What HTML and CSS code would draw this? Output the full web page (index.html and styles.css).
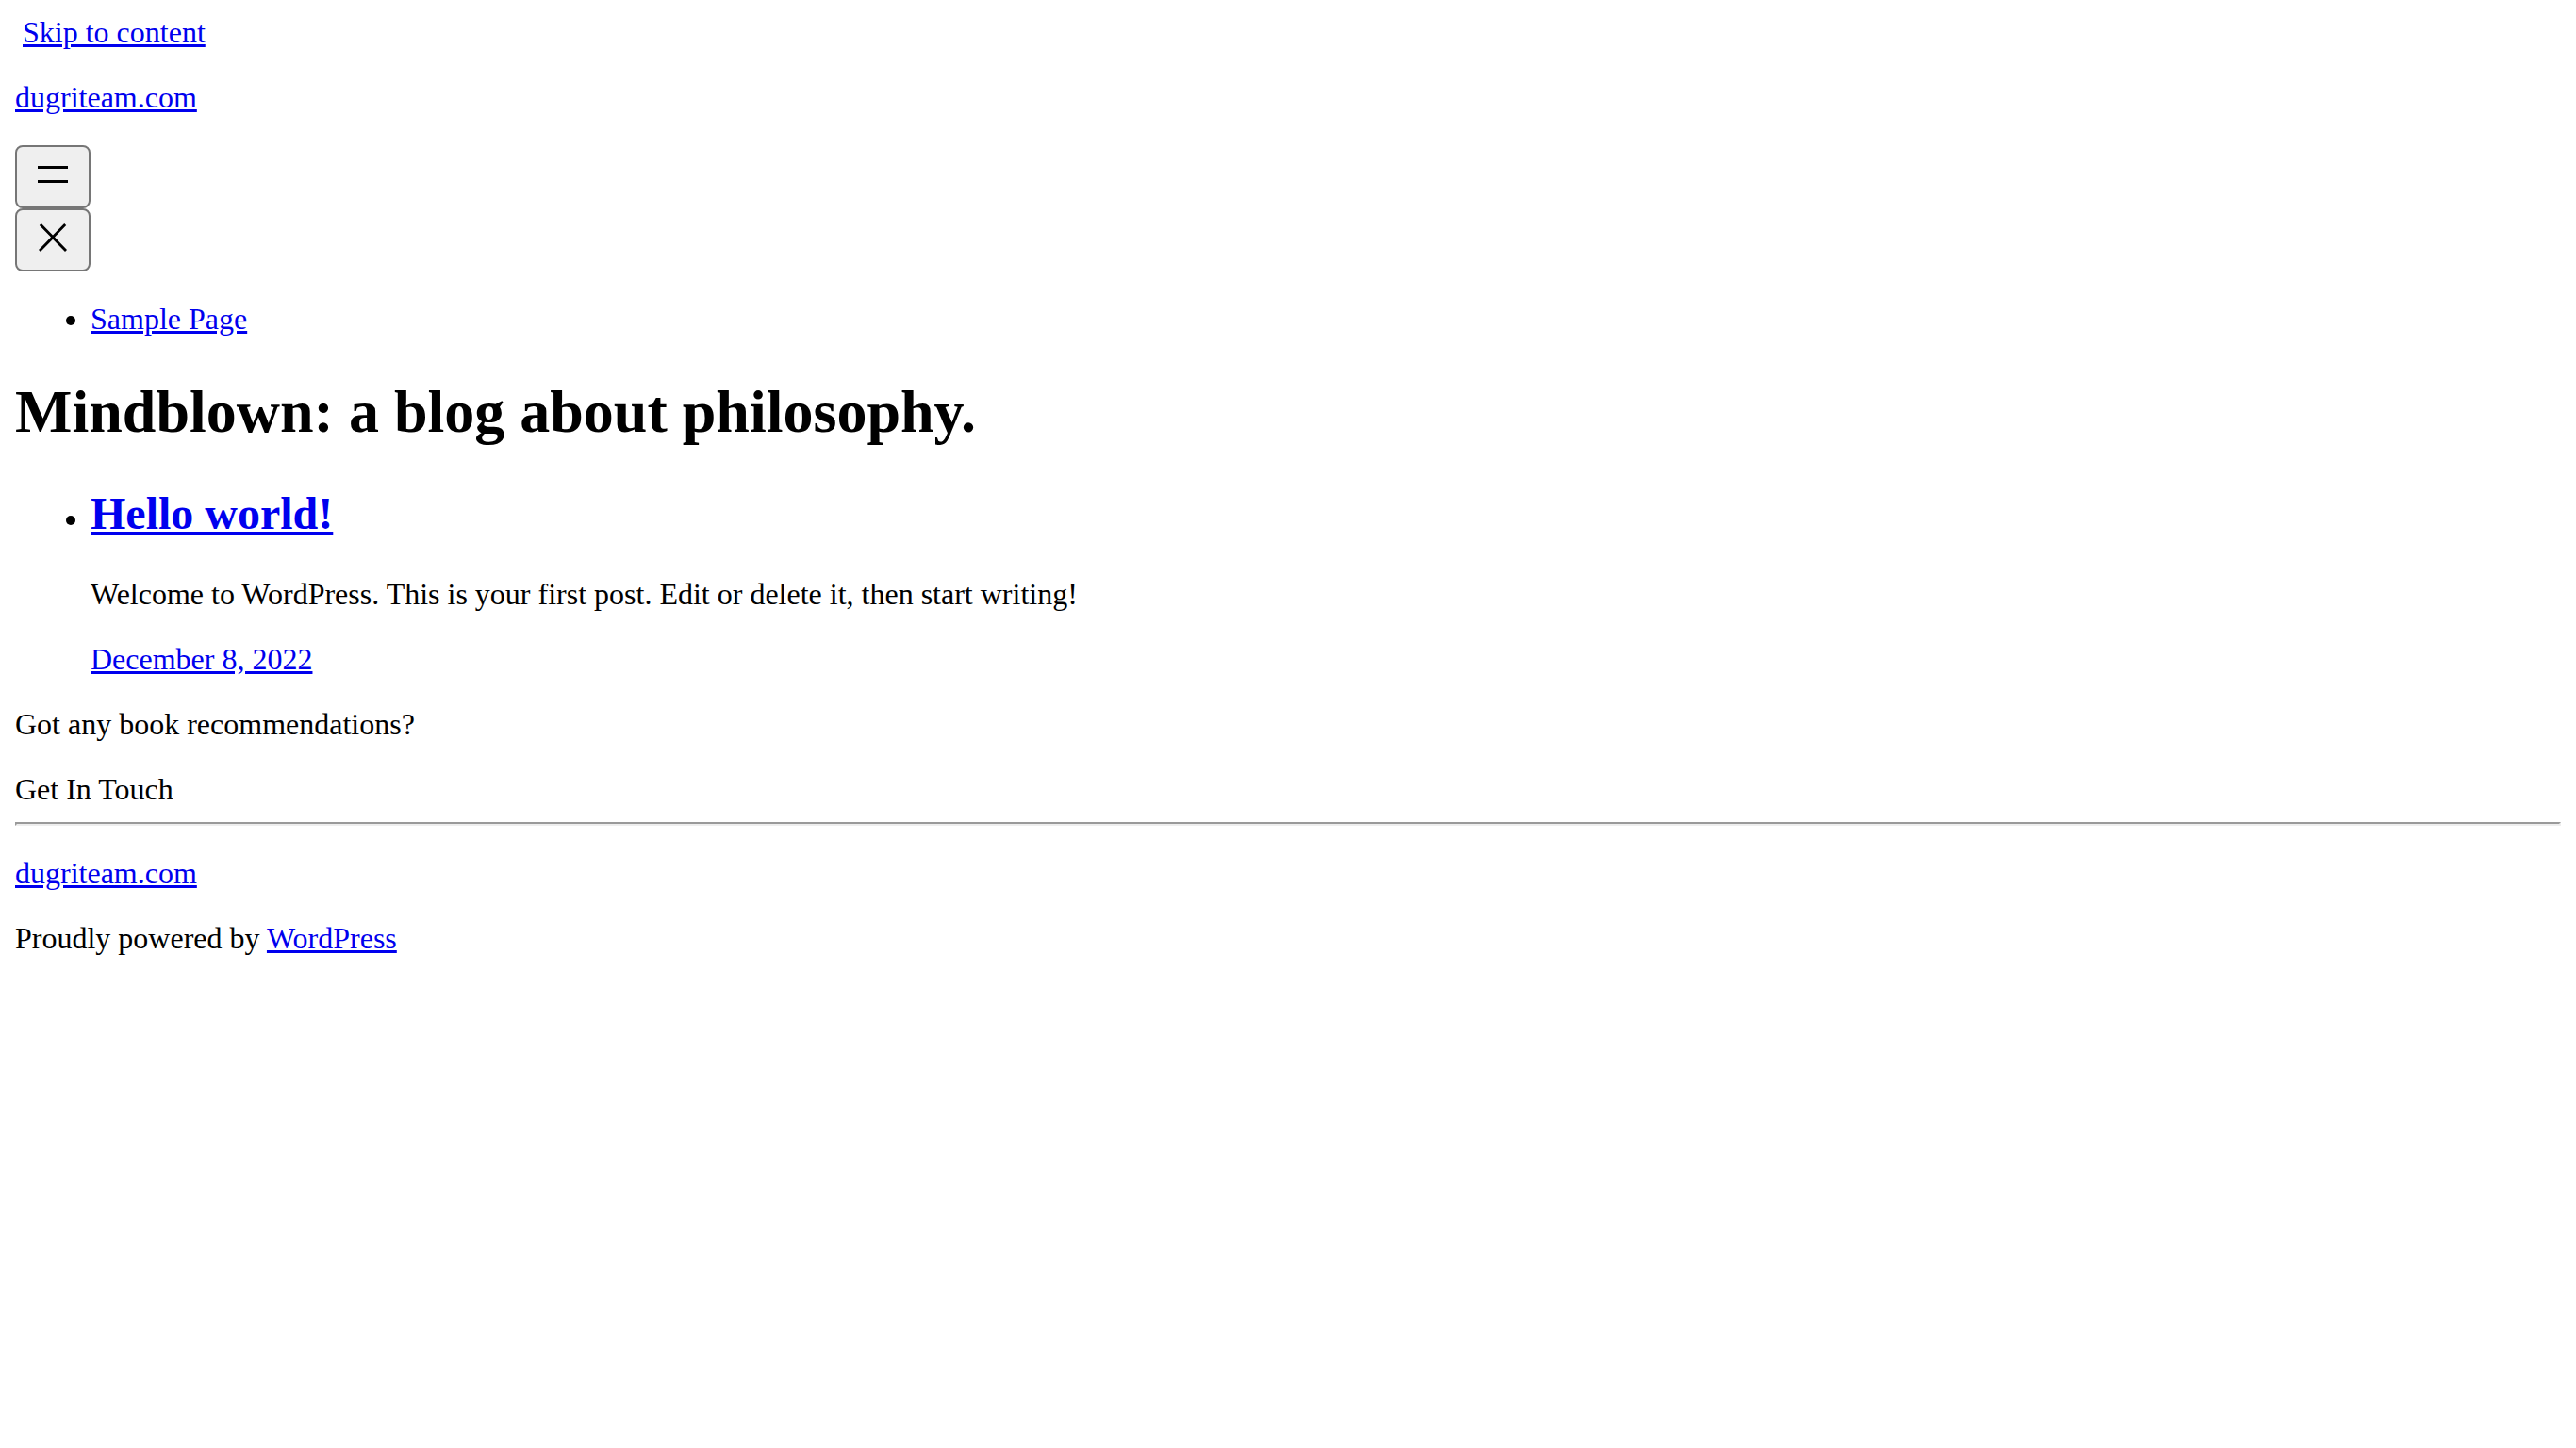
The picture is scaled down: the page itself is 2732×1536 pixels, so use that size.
FILE: index.html
```html
<!DOCTYPE html>
<html lang="en">
<head>
<meta charset="utf-8">
<title>dugriteam.com</title>
<link rel="stylesheet" href="styles.css">
</head>
<body>
<a class="skip-link" href="#content">Skip to content</a>
<header class="site-header">
  <p class="site-title"><a href="#">dugriteam.com</a></p>
  <nav class="nav">
    <div class="nav-buttons">
      <button class="nav-btn" aria-label="Open menu">
        <svg width="48" height="48" viewBox="0 0 24 24" aria-hidden="true"><rect x="4" y="7.5" width="16" height="1.5"/><rect x="4" y="15" width="16" height="1.5"/></svg>
      </button>
      <button class="nav-btn" aria-label="Close menu">
        <svg width="48" height="48" viewBox="0 0 24 24" aria-hidden="true"><path d="M13 11.8l6.1-6.3-1-1-6.1 6.2-6.1-6.2-1 1 6.1 6.3-6.5 6.7 1 1 6.5-6.6 6.5 6.6 1-1z"/></svg>
      </button>
    </div>
    <ul class="list">
      <li><a href="#">Sample Page</a></li>
    </ul>
  </nav>
</header>
<main id="content">
  <h1 class="page-title">Mindblown: a blog about philosophy.</h1>
  <ul class="list">
    <li>
      <h2 class="post-title"><a href="#">Hello world!</a></h2>
      <p class="text">Welcome to WordPress. This is your first post. Edit or delete it, then start writing!</p>
      <p class="text"><a href="#">December 8, 2022</a></p>
    </li>
  </ul>
  <p class="text">Got any book recommendations?</p>
  <div class="cta">Get In Touch</div>
</main>
<hr class="rule">
<footer class="site-footer">
  <p class="text"><a href="#">dugriteam.com</a></p>
  <p class="text">Proudly powered by <a href="#">WordPress</a></p>
</footer>
</body>
</html>
```

FILE: styles.css
```css
html, body {
  background: #ffffff;
}
body {
  margin: 16px;
  font-family: "Liberation Serif", "Times New Roman", serif;
  font-size: 32px;
  color: #000000;
}
a {
  color: #0000ee;
}
.skip-link {
  margin-left: 8px;
}
.site-title,
.text {
  margin: 32px 0;
}
.cta {
  margin: 32px 0 0;
}
.nav-buttons {
  display: flex;
  flex-direction: column;
  align-items: flex-start;
}
.nav-btn {
  display: flex;
  box-sizing: border-box;
  width: 80px;
  height: 67px;
  padding: 5px 14px 10px;
  margin: 0;
  border: 2px solid #767676;
  border-radius: 8px;
  background: #efefef;
  color: #000000;
}
.nav-btn svg {
  display: block;
  fill: currentColor;
}
.list {
  margin: 32px 0;
  padding-left: 80px;
}
.page-title {
  font-size: 64px;
  margin: 42.88px 0;
}
.post-title {
  font-size: 48px;
  margin: 39.84px 0;
}
.rule {
  margin: 16px 0;
  height: 0;
  border-style: solid;
  border-width: 2px;
  border-color: #9a9a9a #eeeeee #eeeeee #9a9a9a;
}
```
